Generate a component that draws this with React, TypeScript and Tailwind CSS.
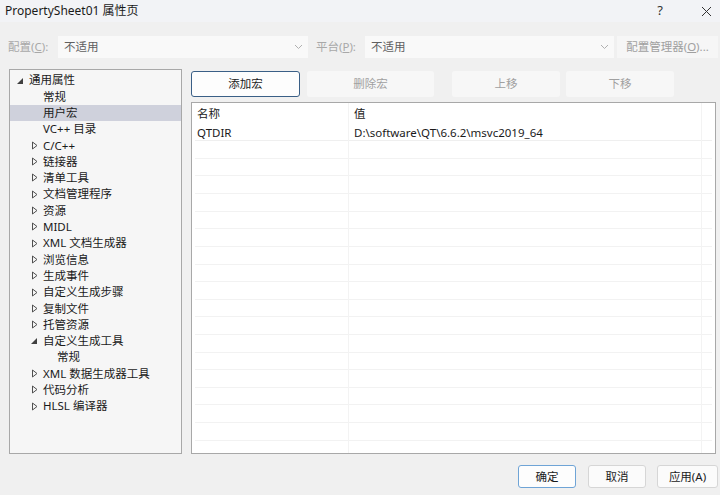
import React from 'react';

const font = { fontFamily: '"Noto Sans", "Noto Sans CJK SC", sans-serif' };

type Node = { label: string; depth: number; state: 'open' | 'closed' | 'leaf'; selected?: boolean };

const tree: Node[] = [
  { label: '通用属性', depth: 0, state: 'open' },
  { label: '常规', depth: 1, state: 'leaf' },
  { label: '用户宏', depth: 1, state: 'leaf', selected: true },
  { label: 'VC++ 目录', depth: 1, state: 'leaf' },
  { label: 'C/C++', depth: 1, state: 'closed' },
  { label: '链接器', depth: 1, state: 'closed' },
  { label: '清单工具', depth: 1, state: 'closed' },
  { label: '文档管理程序', depth: 1, state: 'closed' },
  { label: '资源', depth: 1, state: 'closed' },
  { label: 'MIDL', depth: 1, state: 'closed' },
  { label: 'XML 文档生成器', depth: 1, state: 'closed' },
  { label: '浏览信息', depth: 1, state: 'closed' },
  { label: '生成事件', depth: 1, state: 'closed' },
  { label: '自定义生成步骤', depth: 1, state: 'closed' },
  { label: '复制文件', depth: 1, state: 'closed' },
  { label: '托管资源', depth: 1, state: 'closed' },
  { label: '自定义生成工具', depth: 1, state: 'open' },
  { label: '常规', depth: 2, state: 'leaf' },
  { label: 'XML 数据生成器工具', depth: 1, state: 'closed' },
  { label: '代码分析', depth: 1, state: 'closed' },
  { label: 'HLSL 编译器', depth: 1, state: 'closed' },
];

function Expander({ state }: { state: Node['state'] }) {
  if (state === 'open') {
    return (
      <svg width="9" height="9" viewBox="0 0 9 9" className="shrink-0">
        <polygon points="7,2 7,8 1,8" fill="#404040" />
      </svg>
    );
  }
  if (state === 'closed') {
    return (
      <svg width="9" height="9" viewBox="0 0 9 9" className="shrink-0">
        <polygon points="2.5,1 7,4.5 2.5,8" fill="none" stroke="#505050" strokeWidth="1" />
      </svg>
    );
  }
  return <span className="w-[9px] shrink-0" />;
}

function Combo({ width }: { width: string }) {
  return (
    <div className={`${width} h-[22px] bg-[#f9f9f9] flex items-center pl-[6px] pr-[5px]`}>
      <span className="flex-1 text-[#606060]">不适用</span>
      <svg width="9" height="6" viewBox="0 0 9 6">
        <polyline points="1,1 4.5,4.5 8,1" fill="none" stroke="#b0b0b0" strokeWidth="1" />
      </svg>
    </div>
  );
}

const rowHeights = [18, 17, 18, 18, 17, 18, 18, 17, 18, 17, 18, 18, 17, 18, 17, 18, 18];

export default function App() {
  return (
    <div className="w-[720px] h-[495px] bg-[#f0f0f0] text-[11.5px] text-[#1a1a1a] flex flex-col overflow-hidden" style={font}>
      {/* title bar */}
      <div className="h-[22px] bg-[#f2f3f6] flex items-center pl-[5px] pr-[8px]">
        <span className="flex-1 text-[12px] text-[#1a1a1a]">PropertySheet01 属性页</span>
        <span className="text-[13px] text-[#333] mr-[38px]">?</span>
        <svg width="11" height="11" viewBox="0 0 11 11">
          <path d="M1 1 L10 10 M10 1 L1 10" stroke="#333" strokeWidth="1" />
        </svg>
      </div>

      {/* config row */}
      <div className="flex items-center mt-[14px] pl-[8px] h-[22px]">
        <span className="w-[50px] text-[#a8a8a8]">配置(<span className="underline">C</span>):</span>
        <Combo width="w-[250px]" />
        <span className="ml-[8px] w-[49px] text-[#a8a8a8]">平台(<span className="underline">P</span>):</span>
        <Combo width="w-[249px]" />
        <div className="ml-[3px] w-[101px] h-[22px] bg-[#f6f6f6] flex items-center justify-center text-[#a0a0a0]">
          配置管理器(<span className="underline">O</span>)...
        </div>
      </div>

      {/* main area */}
      <div className="flex mt-[11px] pl-[9px]">
        <div className="w-[173px] h-[385px] bg-[#f6f6f6] border border-[#a8a8a8] pt-[2px] flex flex-col">
          {tree.map((n, i) => (
            <div
              key={i}
              className={`h-[16.3px] flex items-center ${n.selected ? 'bg-[#cfd1dc]' : ''}`}
              style={{ paddingLeft: 6 + n.depth * 14 }}
            >
              <Expander state={n.state} />
              <span className="ml-[4px] leading-none">{n.label}</span>
            </div>
          ))}
        </div>

        <div className="ml-[9px] flex flex-col">
          <div className="flex h-[26px] mt-[2px]">
            <div className="w-[109px] h-[26px] bg-[#fdfdfd] border border-[#3a5f86] rounded-[3px] flex items-center justify-center">添加宏</div>
            <div className="ml-[7px] w-[127px] h-[26px] bg-[#f7f7f7] rounded-[3px] flex items-center justify-center text-[#a0a0a0]">删除宏</div>
            <div className="ml-[18px] w-[108px] h-[26px] bg-[#f7f7f7] rounded-[3px] flex items-center justify-center text-[#a0a0a0]">上移</div>
            <div className="ml-[6px] w-[108px] h-[26px] bg-[#f7f7f7] rounded-[3px] flex items-center justify-center text-[#a0a0a0]">下移</div>
          </div>

          <div className="mt-[5px] w-[525px] h-[352px] bg-white border border-[#a8a8a8] flex flex-col relative">
            <div className="absolute top-0 bottom-0 left-[156px] w-px bg-[#f3f3f3]" />
            <div className="absolute top-0 bottom-0 left-[509px] w-px bg-[#f3f3f3]" />
            <div className="h-[20px] flex items-center pt-[1px]">
              <span className="w-[156px] pl-[5px]">名称</span>
              <span className="pl-[6px]">值</span>
            </div>
            <div className="h-[18px] flex items-center border-b border-[#efefef] mx-[3px] pt-[2px]">
              <span className="w-[153px] pl-[2px]">QTDIR</span>
              <span className="pl-[6px]">D:\software\QT\6.6.2\msvc2019_64</span>
            </div>
            {rowHeights.map((h, i) => (
              <div key={i} className="border-b border-[#f2f2f2] mx-[3px]" style={{ height: h }} />
            ))}
          </div>
        </div>
      </div>

      {/* bottom buttons */}
      <div className="flex justify-end mt-[11px] pr-[2px]">
        <div className="w-[58px] h-[23px] bg-[#fdfdfd] border border-[#6fa4d6] rounded-[3px] flex items-center justify-center">确定</div>
        <div className="ml-[12px] w-[58px] h-[23px] bg-[#fbfbfb] border border-[#d6d6d6] rounded-[3px] flex items-center justify-center">取消</div>
        <div className="ml-[11px] w-[61px] h-[23px] bg-[#fbfbfb] border border-[#d6d6d6] rounded-[3px] flex items-center justify-center">应用(A)</div>
      </div>
    </div>
  );
}
